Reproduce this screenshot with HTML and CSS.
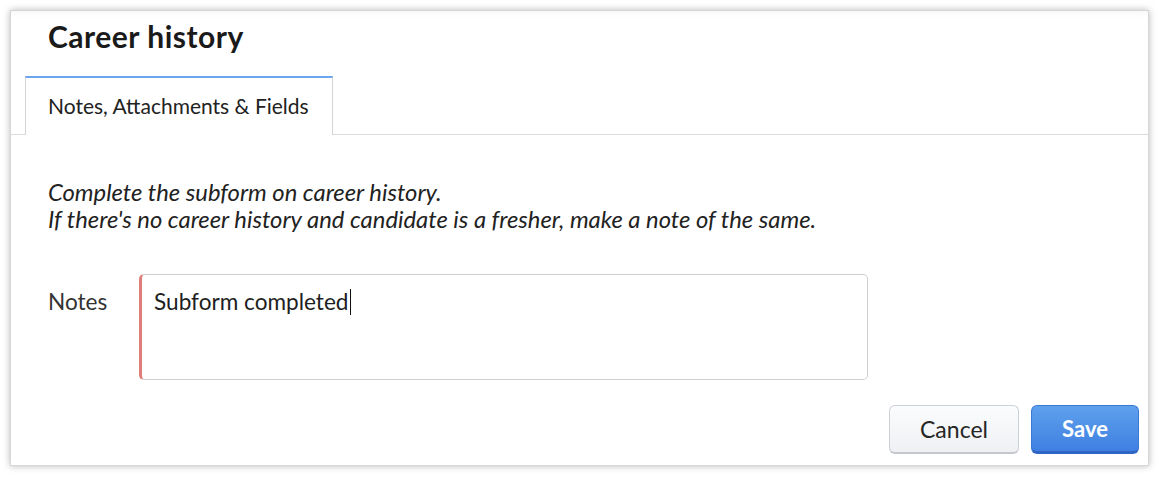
FILE: index.html
```html
<!DOCTYPE html>
<html lang="en">
<head>
<meta charset="utf-8">
<title>Career history</title>
<link rel="stylesheet" href="styles.css">
</head>
<body>
<div class="panel">
  <div class="header">
    <h1 class="title">Career history</h1>
  </div>
  <div class="tabs">
    <div class="tab">Notes, Attachments &amp; Fields</div>
  </div>
  <div class="content">
    <p class="desc">Complete the subform on career history.<br>If there's no career history and candidate is a fresher, make a note of the same.</p>
    <div class="row">
      <div class="label">Notes</div>
      <div class="control">Subform completed<span class="caret"></span></div>
    </div>
  </div>
  <div class="footer">
    <button class="btn btn-cancel" type="button">Cancel</button>
    <button class="btn btn-save" type="button">Save</button>
  </div>
</div>
</body>
</html>
```

FILE: styles.css
```css
* { box-sizing: border-box; }
html, body { margin: 0; background: #ffffff; }
body {
  padding: 10px;
  font-family: Lato, "Open Sans", "Liberation Sans", sans-serif;
  color: #1e1e1e;
}
.panel {
  width: 1139px;
  height: 456px;
  border: 1px solid #d6d6d6;
  background: #ffffff;
  box-shadow: 0 0 7px rgba(0, 0, 0, 0.28), inset 0 10px 10px -10px rgba(0, 0, 0, 0.06);
  display: flex;
  flex-direction: column;
}
.header { padding: 7px 0 0 37px; }
.title {
  margin: 0;
  font-size: 30px;
  line-height: 36px;
  letter-spacing: 0.5px;
  font-weight: 700;
  color: #1a1a1a;
}
.tabs {
  margin-top: 22px;
  padding-left: 14px;
  border-bottom: 1px solid #dcdcdc;
  display: flex;
}
.tab {
  border: 1px solid #d4d4d4;
  border-top: 2px solid #6aa6ee;
  border-bottom: none;
  background: #fff;
  margin-bottom: -1px;
  padding: 15px 23px 17px 22px;
  font-size: 21px;
  line-height: 25px;
  color: #222;
}
.content { padding: 0 37px; }
.desc {
  margin: 44px 0 0;
  font-size: 23.8px;
  line-height: 27px;
  font-style: italic;
  color: #222;
}
.row {
  margin-top: 41px;
  display: flex;
  align-items: flex-start;
}
.label {
  width: 91px;
  padding-top: 15px;
  font-size: 22.6px;
  line-height: 26px;
  color: #333;
}
.control {
  width: 729px;
  height: 106px;
  border: 1px solid #cfcfd3;
  border-left: 3px solid #e07d78;
  border-radius: 5px;
  padding: 14px 12px;
  font-size: 22.6px;
  line-height: 26px;
  color: #1e1e1e;
}
.caret {
  display: inline-block;
  width: 1px;
  height: 26px;
  background: #111;
  vertical-align: top;
  margin-left: 1px;
}
.footer {
  margin-top: auto;
  padding: 0 9px 11px 0;
  display: flex;
  justify-content: flex-end;
  gap: 12px;
}
.btn {
  height: 49px;
  border-radius: 6px;
  font-family: Lato, "Open Sans", "Liberation Sans", sans-serif;
  font-size: 23px;
  line-height: 24px;
  cursor: pointer;
}
.btn-cancel {
  width: 130px;
  border: 1px solid #cdd0d6;
  border-bottom: 2px solid #c4c7cd;
  background: linear-gradient(#fbfcfd, #eef0f3);
  color: #262626;
}
.btn-save {
  width: 108px;
  border: 1px solid #3a78d8;
  border-bottom: 3px solid #2f66c4;
  background: linear-gradient(#5ea1ec, #3f7fe2);
  color: #ffffff;
  font-weight: 700;
  font-size: 22px;
}
```
